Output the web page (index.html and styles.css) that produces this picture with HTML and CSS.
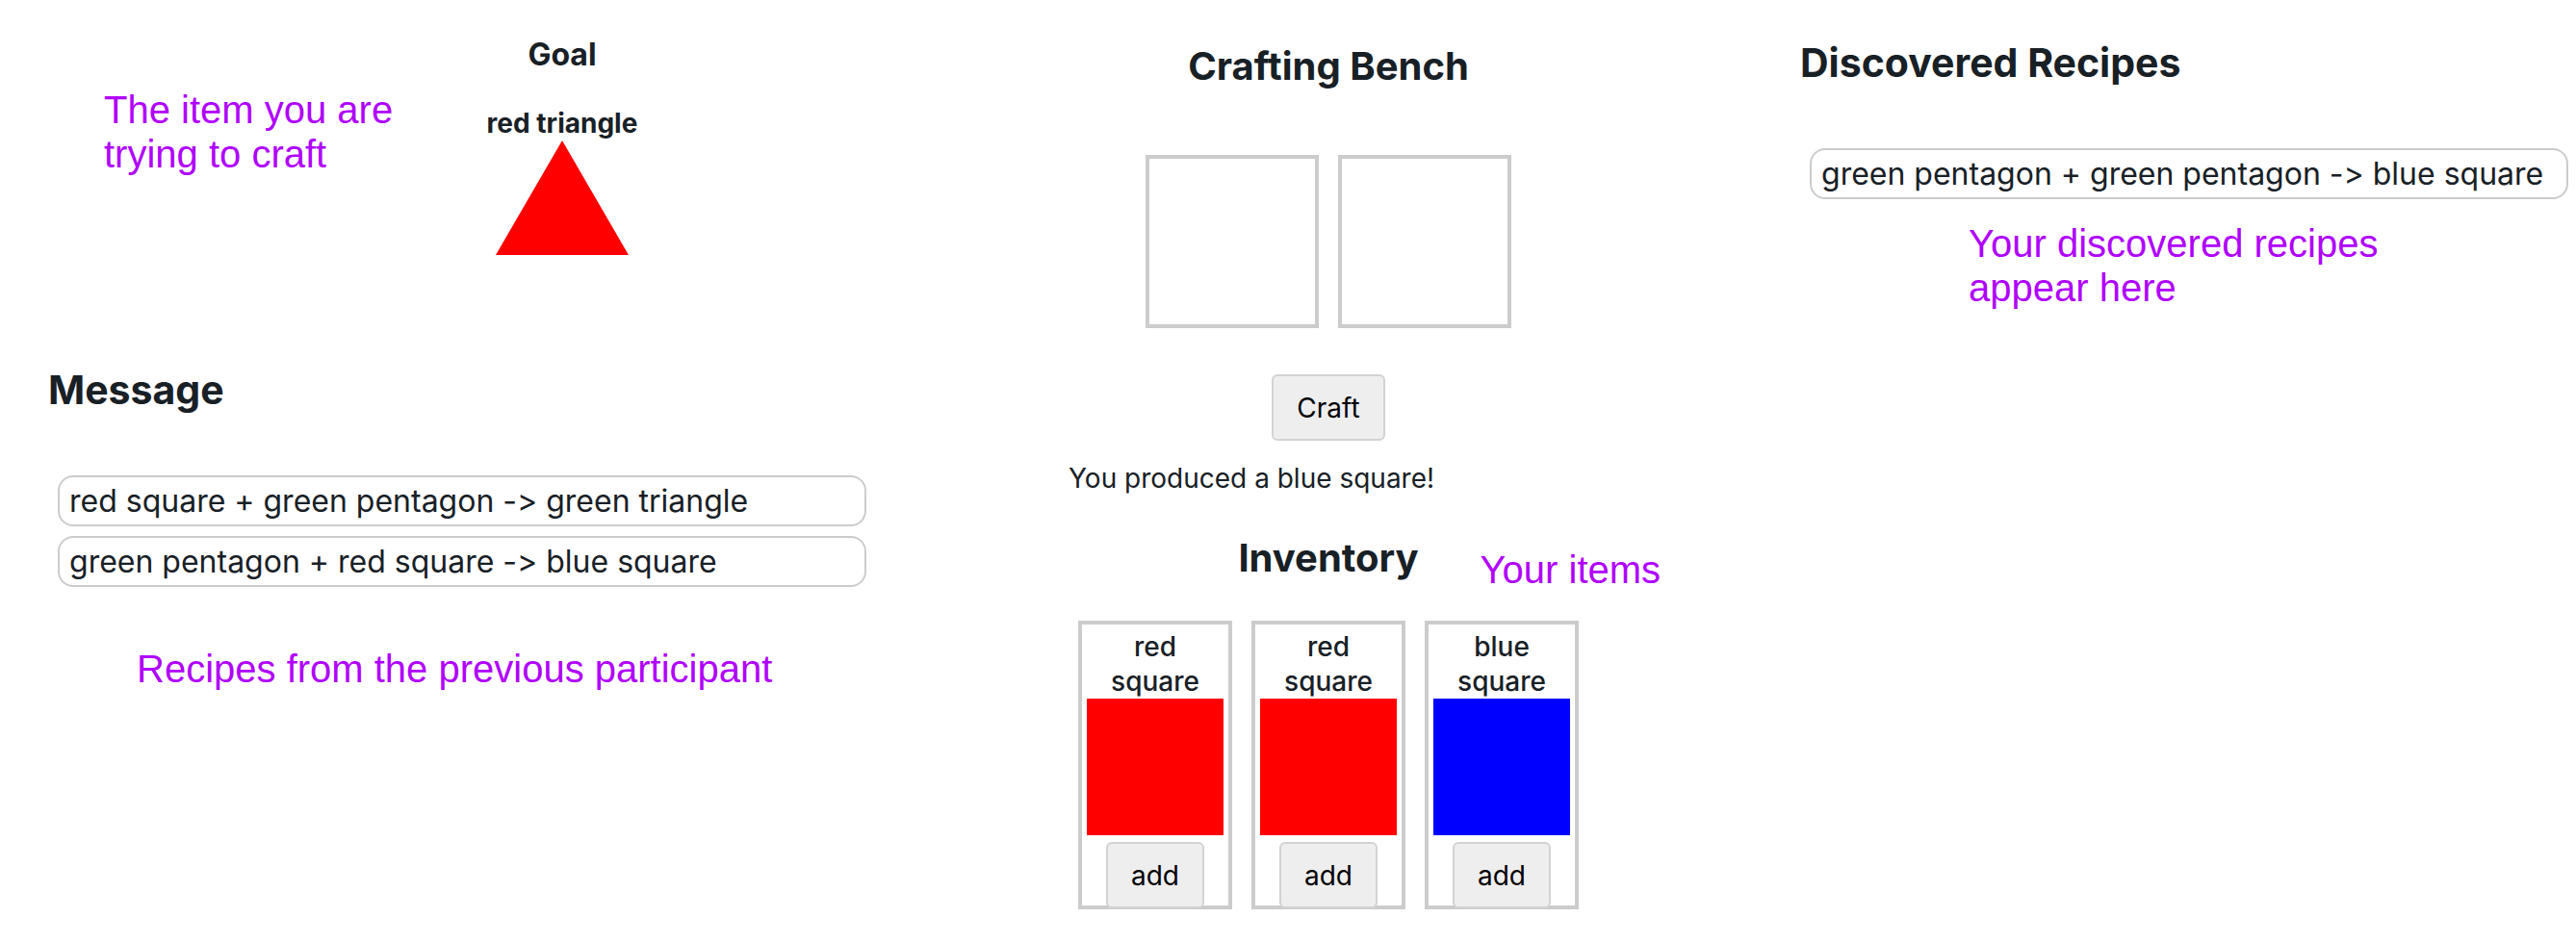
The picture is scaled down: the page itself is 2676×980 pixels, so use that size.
FILE: index.html
```
<!DOCTYPE html>
<html lang="en">
<head>
<meta charset="utf-8">
<title>Crafting Game</title>
<link rel="stylesheet" href="styles.css">
</head>
<body>
<main class="page">
  <div class="column column-left">
    <section class="goal-row">
      <p class="note goal-note">The item you are<br>trying to craft</p>
      <div class="goal">
        <h3 class="goal-title">Goal</h3>
        <p class="goal-name">red triangle</p>
        <svg class="triangle" viewBox="0 0 138 119" aria-hidden="true"><polygon points="69,0 138,119 0,119" fill="#ff0000"/></svg>
      </div>
    </section>
    <section class="message">
      <h2 class="panel-title">Message</h2>
      <ul class="recipes">
        <li class="recipe">red square + green pentagon -&gt; green triangle</li>
        <li class="recipe">green pentagon + red square -&gt; blue square</li>
      </ul>
      <p class="note message-note">Recipes from the previous participant</p>
    </section>
  </div>

  <div class="column column-center">
    <h2 class="center-title">Crafting Bench</h2>
    <div class="bench">
      <div class="slot"></div>
      <div class="slot"></div>
    </div>
    <button class="button craft-button" type="button">Craft</button>
    <p class="result">You produced a blue square!</p>
    <div class="inventory-head">
      <h2 class="center-title inventory-title">Inventory</h2>
      <p class="note inventory-note">Your items</p>
    </div>
    <ul class="inventory">
      <li class="card">
        <span class="card-name">red square</span>
        <span class="square red"></span>
        <button class="button" type="button">add</button>
      </li>
      <li class="card">
        <span class="card-name">red square</span>
        <span class="square red"></span>
        <button class="button" type="button">add</button>
      </li>
      <li class="card">
        <span class="card-name">blue square</span>
        <span class="square blue"></span>
        <button class="button" type="button">add</button>
      </li>
    </ul>
  </div>

  <section class="column column-right">
    <h2 class="panel-title">Discovered Recipes</h2>
    <ul class="recipes">
      <li class="recipe">green pentagon + green pentagon -&gt; blue square</li>
    </ul>
    <p class="note discovered-note">Your discovered recipes<br>appear here</p>
  </section>
</main>
</body>
</html>
```
FILE: styles.css
```
* {
  box-sizing: border-box;
}

body,
h2,
h3,
p,
ul {
  margin: 0;
  padding: 0;
}

ul {
  list-style: none;
}

body {
  background: #fff;
  color: #182026;
  font-family: Inter, "Liberation Sans", sans-serif;
  font-size: 28px;
  line-height: 36px;
  font-variant-ligatures: no-contextual;
}

.page {
  display: grid;
  grid-template-columns: 860fr 560fr 806fr;
  column-gap: 200px;
  padding-left: 50px;
  align-items: start;
}

.column {
  display: flex;
  flex-direction: column;
  min-width: 0;
}

.note {
  color: #b000ff;
  font-family: "Liberation Sans", Arial, sans-serif;
  font-size: 40px;
  line-height: 46px;
}

/* Goal */
.goal-row {
  display: flex;
  padding: 36px 0 0 58px;
}

.goal-note {
  width: 340px;
  padding-top: 55px;
}

.goal {
  display: flex;
  flex-direction: column;
  align-items: center;
  width: 272px;
}

.goal-title {
  font-size: 32px;
  line-height: 42px;
  font-weight: 700;
}

.goal-name {
  margin-top: 32px;
  font-weight: 700;
}

.triangle {
  display: block;
  width: 138px;
  height: 119px;
}

/* Recipe lists */
.message {
  margin-top: 115px;
  padding-right: 2px;
}

.panel-title {
  font-size: 41px;
  line-height: 50px;
  font-weight: 700;
}

.recipes {
  display: flex;
  flex-direction: column;
  gap: 10px;
  margin: 64px 8px 0 10px;
}

.recipe {
  padding: 0 10px;
  border: 2px solid #ccc;
  border-radius: 16px;
  font-size: 32px;
  line-height: 49px;
}

.message-note {
  margin: 62px 0 0 92px;
}

.column-right {
  padding-top: 40px;
}

.discovered-note {
  margin: 23px 0 0 175px;
}

/* Bench and inventory */
.column-center {
  align-items: center;
  padding: 44px 20px 0 0;
}

.center-title {
  font-size: 40px;
  line-height: 50px;
  font-weight: 700;
}

.bench {
  display: flex;
  gap: 20px;
  margin-top: 67px;
}

.slot {
  width: 180px;
  height: 180px;
  border: 4px solid #ccc;
}

.button {
  padding: 15px 24px 14px;
  border: 2px solid #d3d3d3;
  border-radius: 6px;
  background: #eee;
  color: #000;
  font: inherit;
}

.craft-button {
  margin-top: 48px;
}

.result {
  align-self: flex-start;
  margin-top: 21px;
}

.inventory-head {
  display: grid;
  grid-template-columns: minmax(0, 1fr) auto minmax(0, 1fr);
  align-self: stretch;
  margin-top: 40px;
}

.inventory-title {
  grid-column: 2;
}

.inventory-note {
  padding: 14px 0 0 64px;
  margin-bottom: -10px;
  white-space: nowrap;
}

.inventory {
  display: flex;
  gap: 20px;
  margin-top: 40px;
}

.card {
  display: flex;
  flex-direction: column;
  align-items: center;
  width: 160px;
  padding: 5px 5px 0;
  border: 4px solid #ccc;
}

.card-name {
  width: 110px;
  text-align: center;
  font-weight: 500;
}

.square {
  width: 142px;
  height: 142px;
}

.red {
  background: #f00;
}

.blue {
  background: #00f;
}

.card .button {
  margin: 7px 0 -3px;
}
```
